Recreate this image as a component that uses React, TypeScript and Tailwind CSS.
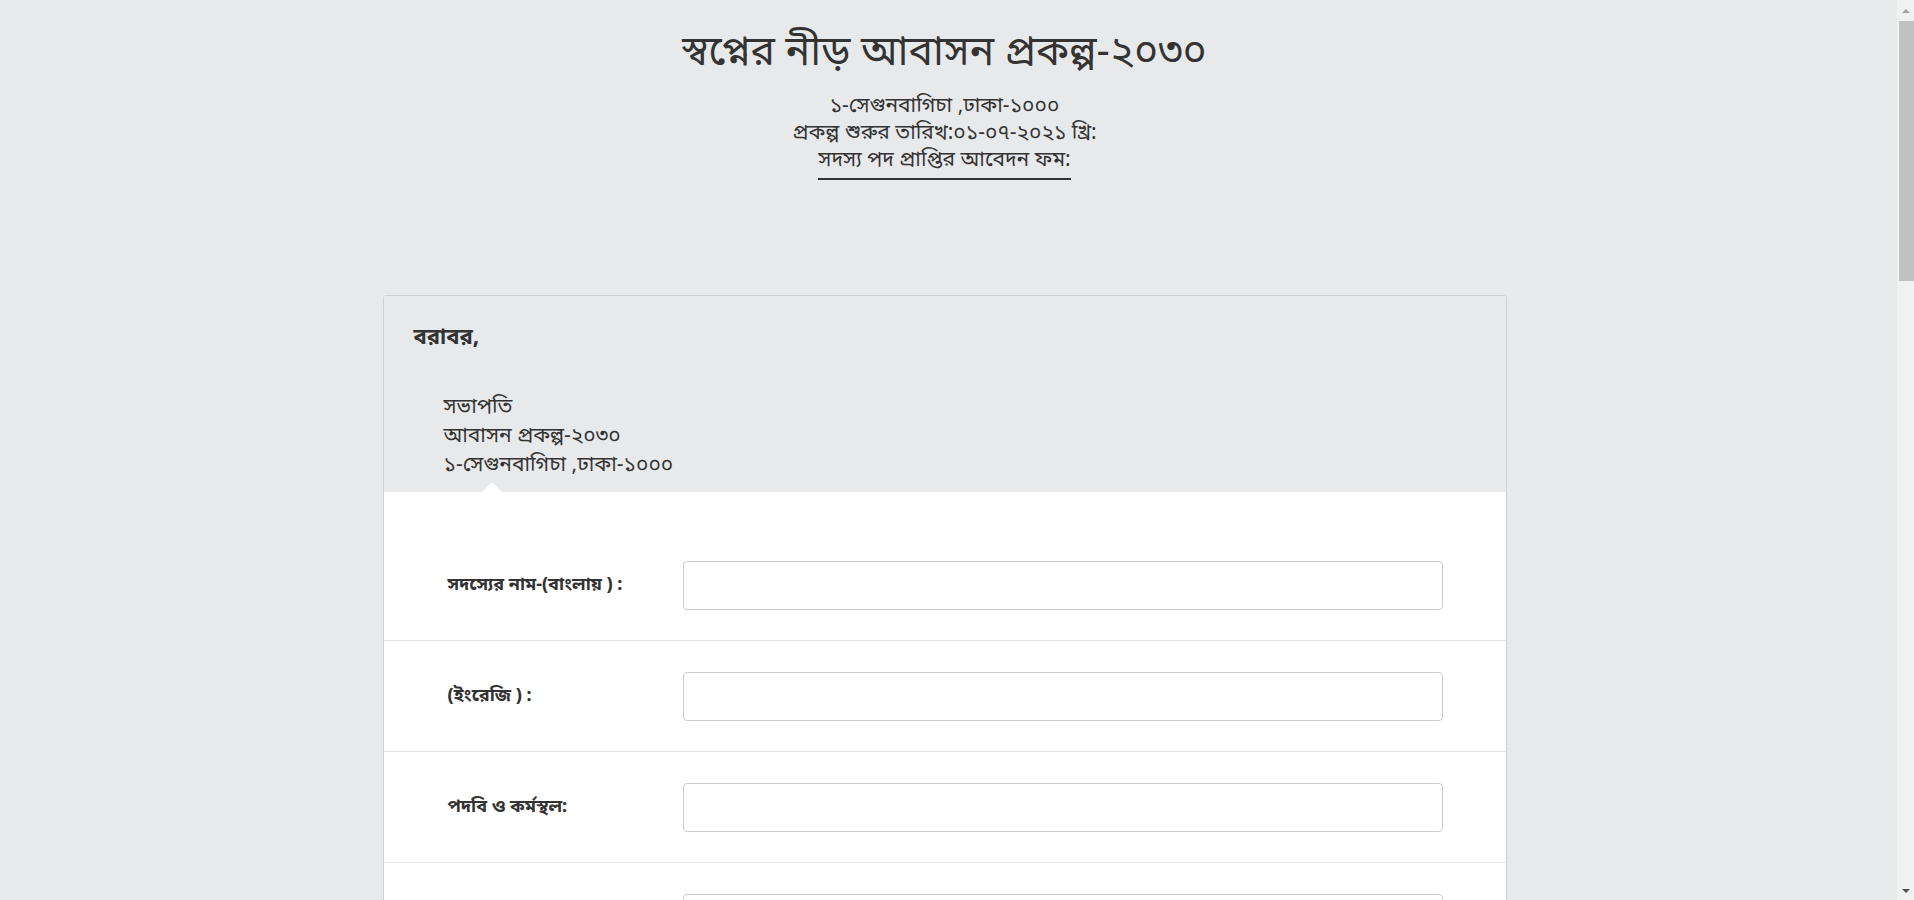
const fields = [
  "সদস্যের নাম-(বাংলায় ) :",
  "(ইংরেজি ) :",
  "পদবি ও কর্মস্থল:",
  "পিতা/স্বামীর নাম:",
  "মাতার নাম:",
  "স্থায়ী ঠিকানা:",
  "বর্তমান ঠিকানা:",
  "মোবাইল নম্বর:",
];

const App = () => {
  return (
    <div
      className="min-h-screen bg-[#e8e9eb] pr-[25px] pb-10 text-[#333]"
      style={{ fontFamily: '"Noto Sans Bengali", "Lohit Bengali", "Noto Sans", sans-serif' }}
    >
      <div className="flex flex-col items-center pt-[30px]">
        <h1 className="text-[41px] leading-[50px] font-normal">
          স্বপ্নের নীড় আবাসন প্রকল্প-২০৩০
        </h1>
        <div className="mt-[14px] flex flex-col items-center text-[21px] leading-[27px]">
          <p>১-সেগুনবাগিচা ,ঢাকা-১০০০</p>
          <p>প্রকল্প শুরুর তারিখ:০১-০৭-২০২১ খ্রি:</p>
          <p className="border-b-2 border-[#333] pb-[3px]">সদস্য পদ প্রাপ্তির আবেদন ফম:</p>
        </div>
      </div>

      <div className="mx-auto mt-[115px] w-[1124px] rounded-[3px] border border-[#cfcfcf] bg-white">
        <div className="relative rounded-t-[3px] bg-[#e8e9eb] px-[30px] pt-[28px] pb-[11px]">
          <p className="text-[22px] leading-[30px] font-bold">বরাবর,</p>
          <div className="mt-[40px] pl-[30px] text-[21px] leading-[29px]">
            <p>সভাপতি</p>
            <p>আবাসন প্রকল্প-২০৩০</p>
            <p>১-সেগুনবাগিচা ,ঢাকা-১০০০</p>
          </div>
          <div className="absolute bottom-0 left-[98px] h-0 w-0 border-x-[10px] border-b-[10px] border-x-transparent border-b-white" />
        </div>

        <div className="pt-[38px]">
          {fields.map((label, i) => (
            <div key={i} className="flex items-center border-b border-[#e3e3e3] pt-[31px] pb-[30px]">
              <label className="w-[299px] pl-[64px] text-[18px] font-bold">{label}</label>
              <input
                type="text"
                className="h-[49px] w-[760px] rounded-[4px] border border-[#cccccc] bg-white px-3 outline-none"
              />
            </div>
          ))}
        </div>
      </div>

      {/* fake classic scrollbar, the reference was shot with one */}
      <div className="fixed top-0 right-0 flex h-screen w-[17px] flex-col items-center bg-[#f1f1f1]">
        <div className="mt-[9px] h-0 w-0 border-x-[4px] border-b-[4px] border-x-transparent border-b-[#a3a3a3]" />
        <div className="mt-[8px] ml-[2px] h-[260px] w-[15px] bg-[#c1c1c1]" />
        <div className="mt-auto mb-[7px] h-0 w-0 border-x-[4px] border-t-[4px] border-x-transparent border-t-[#505050]" />
      </div>
    </div>
  );
};

export default App;
